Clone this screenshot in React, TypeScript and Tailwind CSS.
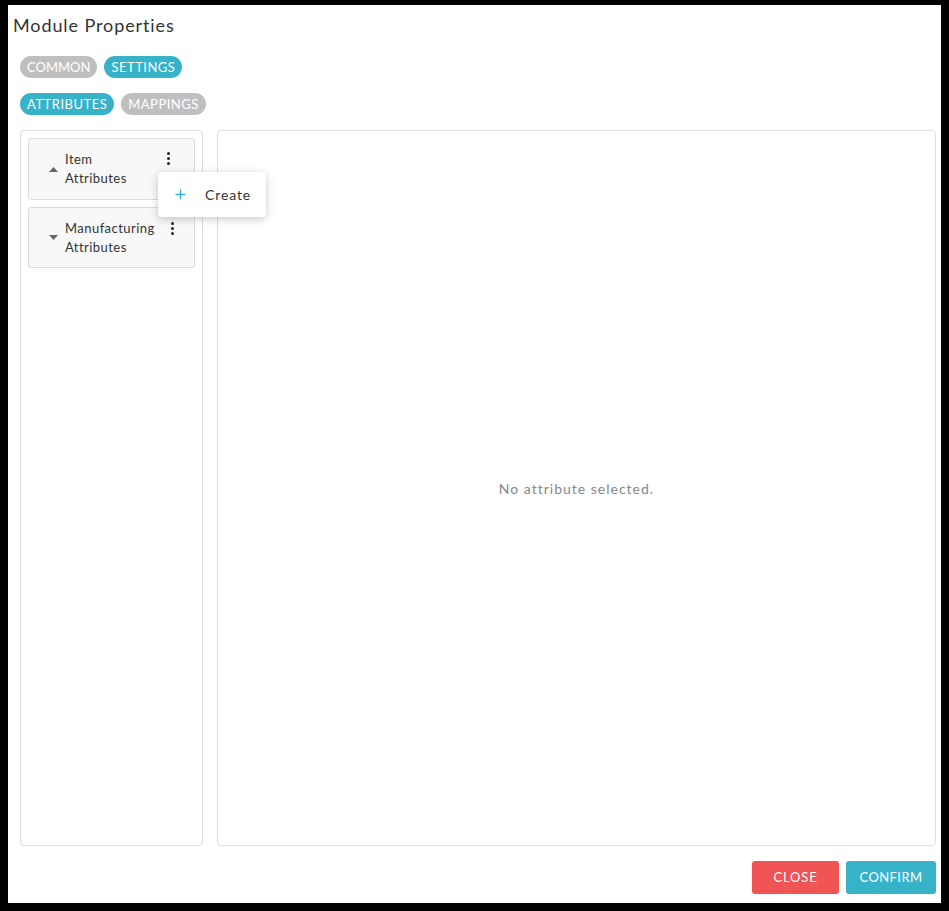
import React from "react";

const font = { fontFamily: "Lato, 'Noto Sans', sans-serif" };

function Pill({ label, active, wide = true }: { label: string; active?: boolean; wide?: boolean }) {
  return (
    <span
      className={`inline-flex h-[22px] items-center rounded-full px-[7px] text-[13px] leading-none text-white ${
        wide ? "tracking-[0.5px]" : "tracking-[0px]"
      } ${active ? "bg-[#36b2c9]" : "bg-[#bfbfbf]"}`}
    >
      {label}
    </span>
  );
}

function Kebab() {
  return (
    <div className="flex flex-col items-center gap-[2px]">
      <span className="h-[3px] w-[3px] rounded-full bg-[#222]" />
      <span className="h-[3px] w-[3px] rounded-full bg-[#222]" />
      <span className="h-[3px] w-[3px] rounded-full bg-[#222]" />
    </div>
  );
}

function Caret({ up }: { up?: boolean }) {
  return (
    <svg width="9" height="5" viewBox="0 0 9 5" className="shrink-0">
      {up ? <path d="M0 5 L4.5 0 L9 5 Z" fill="#666" /> : <path d="M0 0 L4.5 5 L9 0 Z" fill="#666" />}
    </svg>
  );
}

export default function App() {
  return (
    <div
      className="flex h-[911px] w-[949px] flex-col border-b-8 border-l-8 border-r-8 border-t-[5px] border-black bg-white text-[#333]"
      style={font}
    >
      <div className="pl-[5px] pt-[8px] text-[18px] leading-[24px] tracking-[0.9px] text-[#333]">Module Properties</div>

      <div className="ml-[12px] mt-[19px] flex gap-[7px]">
        <Pill label="COMMON" wide={false} />
        <Pill label="SETTINGS" active />
      </div>
      <div className="ml-[12px] mt-[15px] flex gap-[7px]">
        <Pill label="ATTRIBUTES" active />
        <Pill label="MAPPINGS" />
      </div>

      <div className="ml-[12px] mr-[5px] mt-[15px] flex flex-1 gap-[14px]">
        <div className="relative w-[183px] rounded-[4px] border border-[#dcdcdc] p-[7px]">
          <div className="flex flex-col gap-[7px]">
            <div className="relative flex h-[62px] items-center rounded-[3px] border border-[#dcdcdc] bg-[#f8f8f8] pl-[20px] pr-[24px]">
              <Caret up />
              <div className="ml-[7px] text-[13px] leading-[19px] tracking-[0.45px] text-[#333]">
                Item
                <br />
                Attributes
              </div>
              <div className="absolute left-[138px] top-[13px]">
                <Kebab />
              </div>
            </div>
            <div className="relative flex h-[61px] items-center rounded-[3px] border border-[#dcdcdc] bg-[#f8f8f8] pl-[20px] pr-[24px]">
              <Caret />
              <div className="ml-[7px] text-[13px] leading-[19px] tracking-[0.45px] text-[#333]">
                Manufacturing
                <br />
                Attributes
              </div>
              <div className="absolute left-[142px] top-[14px]">
                <Kebab />
              </div>
            </div>
          </div>

          <div className="absolute left-[137px] top-[41px] z-10 flex h-[45px] w-[108px] items-center rounded-[4px] bg-white shadow-[0_2px_8px_rgba(0,0,0,0.22)]">
            <svg width="11" height="11" viewBox="0 0 11 11" className="ml-[17px]">
              <path d="M5.5 0.5 V10.5 M0.5 5.5 H10.5" stroke="#36b2c9" strokeWidth="1.4" />
            </svg>
            <span className="ml-[19px] text-[14px] tracking-[0.9px] text-[#333]">Create</span>
          </div>
        </div>

        <div className="flex flex-1 items-center justify-center rounded-[4px] border border-[#dcdcdc]">
          <span className="text-[14px] tracking-[1px] text-[#888]">No attribute selected.</span>
        </div>
      </div>

      <div className="mb-[9px] mr-[5px] mt-[15px] flex justify-end gap-[7px]">
        <button className="h-[33px] w-[87px] rounded-[3px] bg-[#f05454] text-[13px] tracking-[0.8px] text-white">CLOSE</button>
        <button className="h-[33px] w-[90px] rounded-[3px] bg-[#36b2c9] text-[13px] tracking-[0.4px] text-white">CONFIRM</button>
      </div>
    </div>
  );
}
